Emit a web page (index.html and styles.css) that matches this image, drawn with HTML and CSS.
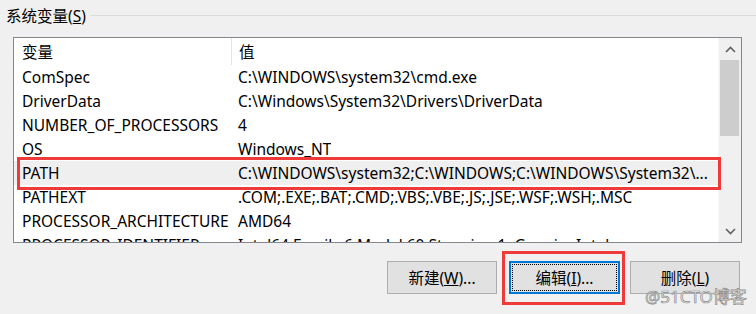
FILE: index.html
```html
<!DOCTYPE html>
<html lang="zh-CN">
<head>
  <meta charset="UTF-8" />
  <title>系统变量</title>
  <link rel="stylesheet" href="styles.css">
</head>
<body>
  <!-- group title -->
  <div class="group-title">
    <span class="legend">系统变量(<u>S</u>)</span>
    <span class="rule"></span>
  </div>

  <!-- variable list -->
  <div class="list">
    <div class="grid">
      <div class="row head">
        <div class="name">变量</div>
        <div class="value">值</div>
      </div>
      <div class="row"><div class="name">ComSpec</div><div class="value">C:\WINDOWS\system32\cmd.exe</div></div>
      <div class="row"><div class="name">DriverData</div><div class="value">C:\Windows\System32\Drivers\DriverData</div></div>
      <div class="row"><div class="name">NUMBER_OF_PROCESSORS</div><div class="value">4</div></div>
      <div class="row"><div class="name">OS</div><div class="value">Windows_NT</div></div>
      <div class="row selected"><div class="name">PATH</div><div class="value">C:\WINDOWS\system32;C:\WINDOWS;C:\WINDOWS\System32\...</div></div>
      <div class="row"><div class="name">PATHEXT</div><div class="value">.COM;.EXE;.BAT;.CMD;.VBS;.VBE;.JS;.JSE;.WSF;.WSH;.MSC</div></div>
      <div class="row"><div class="name">PROCESSOR_ARCHITECTURE</div><div class="value">AMD64</div></div>
      <div class="row"><div class="name">PROCESSOR_IDENTIFIER</div><div class="value">Intel64 Family 6 Model 60 Stepping 1, GenuineIntel</div></div>
    </div>
    <div class="scrollbar">
      <div class="arrow">
        <svg width="11" height="7" viewBox="0 0 11 7"><path d="M1 6 L5.5 1.5 L10 6" fill="none" stroke="#606060" stroke-width="1.6"/></svg>
      </div>
      <div class="thumb"></div>
      <div class="track"></div>
      <div class="arrow">
        <svg width="11" height="7" viewBox="0 0 11 7"><path d="M1 1 L5.5 5.5 L10 1" fill="none" stroke="#606060" stroke-width="1.6"/></svg>
      </div>
    </div>
  </div>

  <!-- buttons -->
  <div class="buttons">
    <button class="btn">新建(<u>W</u>)...</button>
    <div class="mark">
      <button class="btn focused"><span class="focus-ring">编辑(<u>I</u>)...</span></button>
    </div>
    <button class="btn">删除(<u>L</u>)</button>
  </div>

  <!-- annotation and watermark -->
  <div class="path-mark"></div>
  <div class="watermark">@51CTO博客</div>
</body>
</html>
```

FILE: styles.css
```css
body {
  margin: 0;
  background: #f0f0f0;
  font-family: "Noto Sans", "Noto Sans CJK SC", sans-serif;
  font-size: 15.5px;
  color: #000;
  width: 756px;
  height: 314px;
  overflow: hidden;
  position: relative;
}

.group-title {
  display: flex;
  align-items: center;
  height: 30px;
}

.legend {
  padding-left: 6px;
  padding-right: 4px;
  font-size: 15.5px;
}

.rule {
  flex: 1;
  height: 1px;
  background: #dcdcdc;
}

.list {
  display: flex;
  margin: 7px 0 0 13px;
  width: 727px;
  height: 204px;
  border: 1px solid #828790;
  background: #fff;
  overflow: hidden;
}

.grid {
  flex: 1;
  overflow: hidden;
}

.row {
  display: flex;
  height: 24px;
  align-items: center;
  white-space: nowrap;
}

.row.head {
  height: 27px;
}

.row.head .name {
  border-right: 1px solid #e5e5e5;
  height: 100%;
  display: flex;
  align-items: center;
}

.row.selected {
  background: #efefef;
}

.name {
  width: 209px;
  padding-left: 8px;
  flex: none;
}

.value {
  padding-left: 7px;
  overflow: hidden;
}

.scrollbar {
  width: 22px;
  flex: none;
  display: flex;
  flex-direction: column;
  background: #f0f0f0;
  border-left: 1px solid #f6f6f6;
}

.arrow {
  height: 22px;
  display: flex;
  align-items: center;
  justify-content: center;
}

.thumb {
  height: 76px;
  margin: 0 2px 0 1px;
  background: #cdcdcd;
}

.track {
  flex: 1;
}

.buttons {
  display: flex;
  align-items: flex-start;
  margin: 8px 0 0 387px;
}

.btn {
  width: 110px;
  height: 33px;
  margin-top: 10px;
  border: 1px solid #adadad;
  background: #e1e1e1;
  font-family: "Noto Sans", "Noto Sans CJK SC", sans-serif;
  font-size: 15.5px;
  color: #000;
  padding: 0;
}

.mark {
  margin-left: 5px;
  margin-right: 5px;
  border: 3px solid #ef3a3a;
  padding: 7px 2px 8px 4px;
}

.btn.focused {
  width: 111px;
  margin-top: 0;
  border: 2px solid #0078d7;
  padding: 1px;
}

.focus-ring {
  display: flex;
  align-items: center;
  justify-content: center;
  height: 100%;
  border: 1px dotted #000;
  box-sizing: border-box;
}

.path-mark {
  position: absolute;
  left: 17px;
  top: 157px;
  width: 698px;
  height: 27px;
  border: 3px solid #ef3a3a;
}

.watermark {
  position: absolute;
  left: 645px;
  top: 283px;
  font-size: 17px;
  color: #f7f7f7;
  -webkit-text-stroke: 0.7px #8a8a8a;
}
```
